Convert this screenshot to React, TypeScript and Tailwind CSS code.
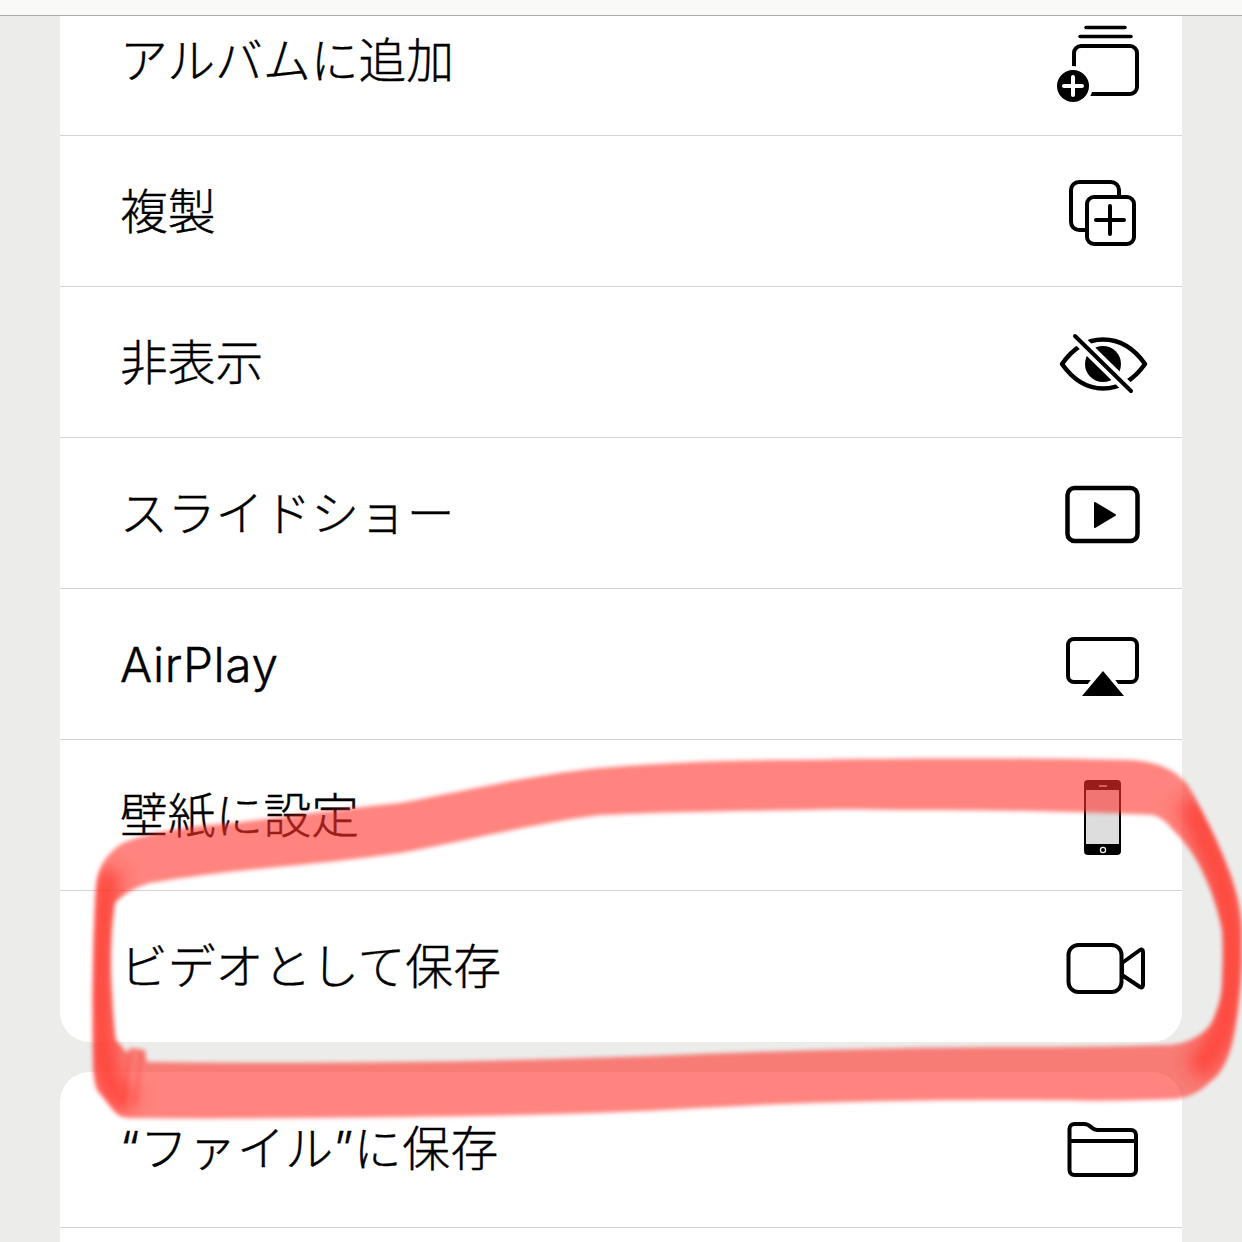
import type { ReactNode } from 'react';

const Frame = ({ children }: { children: ReactNode }) => (
  <svg width="92" height="92" viewBox="0 0 92 92" fill="none" stroke="#000" strokeWidth="4" className="overflow-visible">
    {children}
  </svg>
);

const AlbumAdd = () => (
  <Frame>
    <path d="M30 13.5H69" strokeLinecap="round" strokeWidth="3.5" />
    <path d="M24 22.5H75" strokeLinecap="round" strokeWidth="3.5" />
    <rect x="18" y="32" width="63" height="48" rx="7" />
    <circle cx="17" cy="72" r="20" fill="#fff" stroke="none" />
    <circle cx="17" cy="72" r="16" fill="#000" stroke="none" />
    <path d="M8 72H26M17 63V81" stroke="#fff" strokeLinecap="round" />
  </Frame>
);

const Duplicate = () => (
  <Frame>
    <rect x="15" y="17" width="48" height="48" rx="8" />
    <rect x="31" y="32" width="47" height="47" rx="7" fill="#fff" />
    <path d="M40 55H68M54 41V69" strokeLinecap="round" />
  </Frame>
);

const EyeOff = () => (
  <Frame>
    <path d="M6 48C18 31 32 23.5 47 23.5C62 23.5 77 31 89 48C77 65 62 72.5 47 72.5C32 72.5 18 65 6 48Z" strokeWidth="4.5" strokeLinejoin="round" />
    <circle cx="47" cy="48" r="18" fill="#000" stroke="none" />
    <path d="M19 20L75 75" stroke="#fff" strokeWidth="12" />
    <path d="M19 20L75 75" strokeLinecap="round" />
  </Frame>
);

const Slideshow = () => (
  <Frame>
    <rect x="11.5" y="21" width="70" height="53" rx="7" strokeWidth="4.5" />
    <path d="M39 36L59 48L39 60Z" fill="#000" stroke="#000" strokeWidth="2" strokeLinejoin="round" />
  </Frame>
);

const AirPlay = () => (
  <Frame>
    <rect x="12" y="21" width="69" height="43" rx="6" />
    <path d="M47 46L76 84H18Z" fill="#fff" stroke="none" />
    <path d="M47 53L68 78H26Z" fill="#000" stroke="none" />
  </Frame>
);

const Phone = () => (
  <Frame>
    <rect x="28" y="11" width="37" height="75" rx="4" fill="#000" stroke="none" />
    <rect x="30" y="21" width="33" height="54" fill="#ddd" stroke="none" />
    <path d="M43 17H51" stroke="#ddd" strokeWidth="1.5" />
    <circle cx="47" cy="81" r="2.6" stroke="#fff" strokeWidth="1.2" />
  </Frame>
);

const Video = () => (
  <Frame>
    <rect x="12.5" y="24" width="53" height="47" rx="10" />
    <path d="M66 42L84 29C86 28 87 29 87 31V64C87 66 86 67 84 66L66 54Z" strokeLinejoin="round" />
  </Frame>
);

const Folder = () => (
  <Frame>
    <path
      d="M13.5 37V25C13.5 22 15.5 20 18.5 20H28C31 20 33 21 35 23C37 25 38 26 41 26H75C78 26 80 28 80 31V66C80 69 78 71 75 71H18.5C15.5 71 13.5 69 13.5 66Z"
      strokeLinejoin="round"
    />
    <path d="M13.5 37H80" />
  </Frame>
);

const menuRows = [
  { label: 'アルバムに追加', icon: <AlbumAdd /> },
  { label: '複製', icon: <Duplicate /> },
  { label: '非表示', icon: <EyeOff /> },
  { label: 'スライドショー', icon: <Slideshow /> },
  { label: 'AirPlay', icon: <AirPlay />, labelClass: 'tracking-[0.6px]' },
  { label: '壁紙に設定', icon: <Phone /> },
  { label: 'ビデオとして保存', icon: <Video /> },
];

const Row = ({ label, icon, last, labelClass }: { label: string; icon: ReactNode; last?: boolean; labelClass?: string }) => (
  <div className={`flex h-[151px] items-center justify-between pl-[60px] pr-[34px] ${last ? '' : 'border-b border-[#d4d4d6]'}`}>
    <span className={`mt-[3px] text-[47.8px] leading-none font-light [-webkit-text-stroke:0.4px_#000] text-black whitespace-nowrap ${labelClass ?? ''}`}>
      {label}
    </span>
    <div className="flex h-[92px] w-[92px] shrink-0">{icon}</div>
  </div>
);

// marker scribble, outer contour then inner contour
const markerPath =
  'M93 1060C92 1000 93 930 96 885C98 866 108 852 123 843C150 832 190 826 233 823C290 816 350 808 400 803C470 790 530 775 600 768C670 762 730 760 800 760C900 758 1040 758 1130 760C1160 762 1175 770 1188 785C1205 815 1220 845 1230 873C1238 895 1242 915 1242 935C1243 960 1241 1000 1233 1040C1228 1062 1220 1075 1210 1082C1200 1092 1190 1097 1175 1099C1100 1102 1050 1100 1000 1100C900 1100 800 1102 700 1108C600 1114 500 1116 400 1117C310 1118 220 1119 130 1118C122 1118 117 1115 113 1110L97 1090C94 1082 93 1070 93 1060Z' +
  'M115 903C111 930 110 965 112 993C113 1010 114 1028 116 1040L127 1053C128 1049 130 1048 133 1048L145 1050L147 1062C230 1063 320 1063 400 1062C500 1061 600 1058 700 1054C800 1050 920 1047 1030 1047C1080 1047 1130 1046 1163 1045C1175 1045 1183 1043 1190 1040C1203 1034 1209 1028 1213 1020C1219 1005 1222 995 1222 980C1223 960 1223 945 1222 930C1218 910 1212 892 1203 873C1195 855 1185 842 1173 830C1167 822 1160 817 1153 815C1100 812 1000 810 900 810C860 809 830 809 800 810C720 811 660 812 600 815C530 824 470 840 400 853C350 860 310 864 267 868C225 872 185 877 150 883C135 887 122 895 115 903Z';

export default function App() {
  return (
    <div className="relative h-[1242px] w-[1242px] overflow-hidden bg-[#ecedeb] font-['Inter','Noto_Sans_CJK_JP',sans-serif]">
      <div className="relative z-10 h-4 border-b border-[#aaaaaa] bg-[#f9f9f7]" />

      <div className="mx-[60px] -mt-[31px] overflow-hidden rounded-b-[30px] bg-white">
        {menuRows.map((row, i) => (
          <Row key={row.label} label={row.label} icon={row.icon} labelClass={row.labelClass} last={i === menuRows.length - 1} />
        ))}
      </div>

      <div className="mx-[60px] mt-[30px] rounded-t-[30px] bg-white">
        <div className="flex h-[156px] items-center justify-between border-b border-[#d4d4d6] pl-[60px] pr-[34px]">
          <span className="text-[47.8px] leading-none font-light tracking-[0.6px] [-webkit-text-stroke:0.4px_#000] text-black whitespace-nowrap">“ファイル”に保存</span>
          <div className="flex h-[92px] w-[92px] shrink-0">
            <Folder />
          </div>
        </div>
        <div className="h-[60px]" />
      </div>

      <svg className="pointer-events-none absolute inset-0 z-20 blur-[2px]" width="1242" height="1242" viewBox="0 0 1242 1242">
        <defs>
          <clipPath id="marker-clip">
            <path d={markerPath} clipRule="evenodd" />
          </clipPath>
          <filter id="soft" x="-20%" y="-20%" width="140%" height="140%">
            <feGaussianBlur stdDeviation="9" />
          </filter>
        </defs>
        <path d={markerPath} fillRule="evenodd" fill="#ff3028" fillOpacity="0.6" />
        <g clipPath="url(#marker-clip)">
          <g filter="url(#soft)">
            <path d="M108 870C100 940 100 1010 104 1065C108 1085 118 1098 130 1105" fill="none" stroke="#ff3028" strokeOpacity="0.75" strokeWidth="26" />
            <path d="M1190 800C1205 840 1232 890 1232 950C1232 1000 1228 1040 1195 1072" fill="none" stroke="#ff3028" strokeOpacity="0.75" strokeWidth="26" />
          </g>
          <path d="M130 1055L122 1105M141 1052L136 1105" fill="none" stroke="#ff3028" strokeOpacity="0.25" strokeWidth="4" />
        </g>
      </svg>
    </div>
  );
}
